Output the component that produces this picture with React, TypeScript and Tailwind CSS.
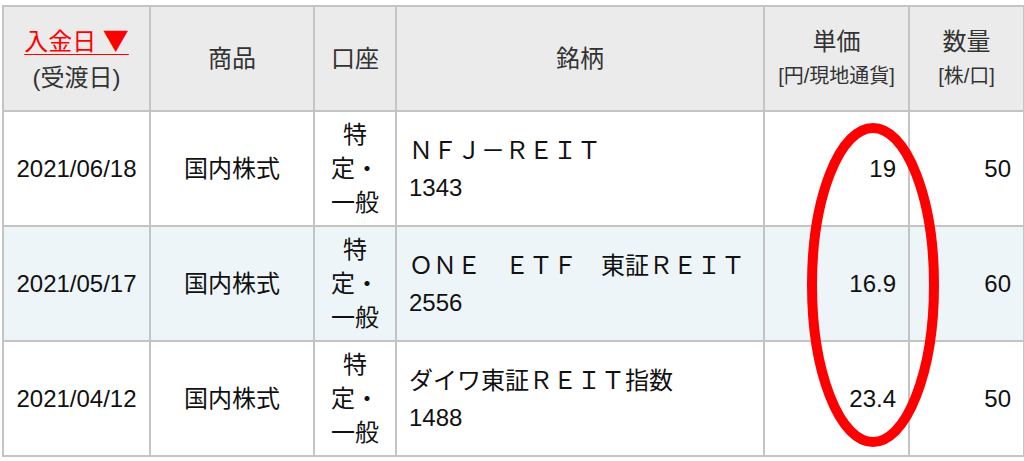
const rows = [
  { date: "2021/06/18", product: "国内株式", name: "ＮＦＪ－ＲＥＩＴ", code: "1343", price: "19", qty: "50", alt: false },
  { date: "2021/05/17", product: "国内株式", name: "ＯＮＥ　ＥＴＦ　東証ＲＥＩＴ", code: "2556", price: "16.9", qty: "60", alt: true },
  { date: "2021/04/12", product: "国内株式", name: "ダイワ東証ＲＥＩＴ指数", code: "1488", price: "23.4", qty: "50", alt: false },
];

const font = { fontFamily: '"Liberation Sans", "Noto Sans CJK JP", sans-serif' };

export default function App() {
  return (
    <div className="relative h-[461px] w-[1024px] overflow-hidden bg-white" style={font}>
      <div className="pl-[2px] pt-[5px]">
        <table className="w-[1021px] table-fixed border-collapse border-2 border-[#c4c4c4] text-[24px] text-[#111]">
          <colgroup>
            <col className="w-[147px]" />
            <col className="w-[164px]" />
            <col className="w-[82px]" />
            <col className="w-[368px]" />
            <col className="w-[145px]" />
            <col className="w-[115px]" />
          </colgroup>
          <thead>
            <tr className="h-[105px] bg-[#ebebeb] text-[#333]">
              <th className="border-2 border-[#c4c4c4] font-normal leading-[36px]">
                <a className="text-[#ff0000] underline decoration-1 underline-offset-4">
                  入金日 <span className="font-['Noto_Sans_CJK_JP'] text-[26px]">▼</span>
                </a>
                <div>(受渡日)</div>
              </th>
              <th className="border-2 border-[#c4c4c4] font-normal">商品</th>
              <th className="border-2 border-[#c4c4c4] font-normal">口座</th>
              <th className="border-2 border-[#c4c4c4] font-normal">銘柄</th>
              <th className="border-2 border-[#c4c4c4] font-normal leading-[34px]">
                <div>単価</div>
                <div className="text-[20px]">[円/現地通貨]</div>
              </th>
              <th className="border-2 border-[#c4c4c4] font-normal leading-[34px]">
                <div>数量</div>
                <div className="text-[20px]">[株/口]</div>
              </th>
            </tr>
          </thead>
          <tbody>
            {rows.map((r) => (
              <tr key={r.date} className={r.alt ? "h-[115px] bg-[#eef5f9]" : "h-[115px] bg-white"}>
                <td className="border-2 border-[#c4c4c4] text-center">{r.date}</td>
                <td className="border-2 border-[#c4c4c4] text-center">{r.product}</td>
                <td className="border-2 border-[#c4c4c4] text-center leading-[34px]">
                  特<br />定・<br />一般
                </td>
                <td className="border-2 border-[#c4c4c4] px-3 leading-[37px]">
                  <div>{r.name}</div>
                  <div>{r.code}</div>
                </td>
                <td className="border-2 border-[#c4c4c4] pr-3 text-right">{r.price}</td>
                <td className="border-2 border-[#c4c4c4] pr-3 text-right">{r.qty}</td>
              </tr>
            ))}
          </tbody>
        </table>
      </div>
      <svg className="absolute left-[802px] top-[118px]" width="142" height="334" viewBox="0 0 142 334">
        <ellipse cx="71" cy="167" rx="61" ry="157" fill="none" stroke="#ff0000" strokeWidth="10" />
      </svg>
    </div>
  );
}
